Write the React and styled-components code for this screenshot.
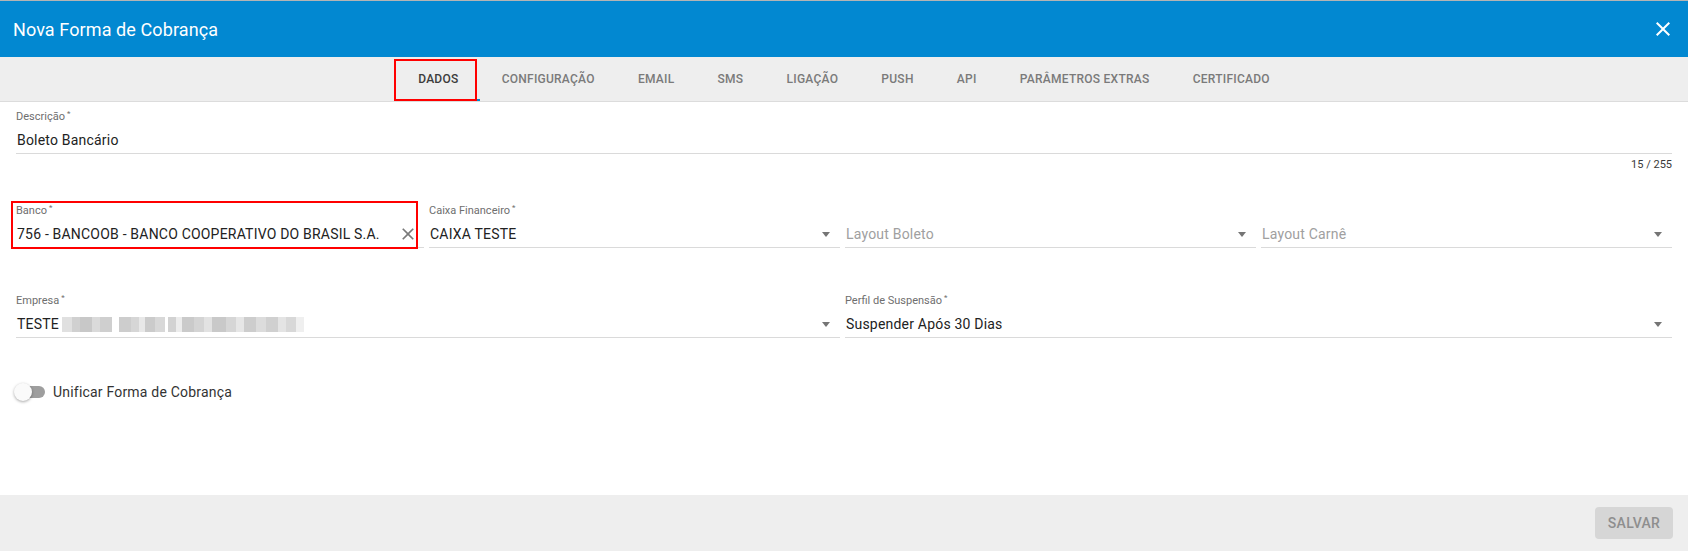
import React from "react";
import styled, { createGlobalStyle, css } from "styled-components";

const GlobalStyle = createGlobalStyle`
  html, body {
    margin: 0;
    padding: 0;
    height: 100%;
  }
  body {
    font-family: Roboto, "Liberation Sans", sans-serif;
    background: #fff;
  }
  #root {
    height: 100%;
  }
`;

const TABS = [
  "Dados",
  "Configuração",
  "Email",
  "SMS",
  "Ligação",
  "Push",
  "API",
  "Parâmetros Extras",
  "Certificado",
];

// blurred company name, pieces of the mosaic
const MOSAIC = [
  [10, "#e0e0e0"], [8, "#d0d0d0"], [12, "#c8c8c8"], [8, "#dadada"], [12, "#cfcfcf"],
  [7, "#fff"],
  [12, "#cdcdcd"], [8, "#d6d6d6"], [6, "#e8e8e8"], [10, "#cbcbcb"], [10, "#d8d8d8"],
  [3, "#fff"],
  [8, "#d2d2d2"], [6, "#ececec"], [12, "#cacaca"], [10, "#d4d4d4"], [8, "#e2e2e2"],
  [14, "#c9c9c9"], [10, "#d6d6d6"], [8, "#e6e6e6"], [12, "#cdcdcd"], [10, "#dcdcdc"],
  [12, "#d0d0d0"], [8, "#e4e4e4"], [10, "#d8d8d8"], [8, "#efefef"],
];

const CloseIcon = ({ size = 24, color = "#fff" }) => (
  <svg width={size} height={size} viewBox="0 0 24 24" fill={color}>
    <path d="M19 6.41L17.59 5 12 10.59 6.41 5 5 6.41 10.59 12 5 17.59 6.41 19 12 13.41 17.59 19 19 17.59 13.41 12z" />
  </svg>
);

const App = () => {
  return (
    <>
      <GlobalStyle />
      <Modal>
        <Header>
          <Title>Nova Forma de Cobrança</Title>
          <CloseButton type="button">
            <CloseIcon size={24} />
          </CloseButton>
        </Header>

        <TabBar>
          {TABS.map((t, i) => (
            <Tab key={t} $active={i === 0} $marked={i === 0}>
              {t}
            </Tab>
          ))}
        </TabBar>

        <Body>
          <Field>
            <Label>
              Descrição<Req>*</Req>
            </Label>
            <Control>
              <Value>Boleto Bancário</Value>
            </Control>
            <Counter>15 / 255</Counter>
          </Field>

          <Grid>
            <Field $marked>
              <Label>
                Banco<Req>*</Req>
              </Label>
              <Control>
                <Value>756 - BANCOOB - BANCO COOPERATIVO DO BRASIL S.A.</Value>
                <ClearBox>
                  <CloseIcon size={20} color="#7a7a7a" />
                </ClearBox>
              </Control>
            </Field>
            <Field>
              <Label>
                Caixa Financeiro<Req>*</Req>
              </Label>
              <Control>
                <Value>CAIXA TESTE</Value>
                <ArrowBox />
              </Control>
            </Field>
            <Field>
              <Label />
              <Control>
                <Value $placeholder>Layout Boleto</Value>
                <ArrowBox />
              </Control>
            </Field>
            <Field>
              <Label />
              <Control>
                <Value $placeholder>Layout Carnê</Value>
                <ArrowBox />
              </Control>
            </Field>

            <Field $span={2}>
              <Label>
                Empresa<Req>*</Req>
              </Label>
              <Control>
                <Value>
                  TESTE
                  <Mosaic>
                    {MOSAIC.map(([w, c], i) => (
                      <Tile key={i} $w={w} $c={c} />
                    ))}
                  </Mosaic>
                </Value>
                <ArrowBox />
              </Control>
            </Field>
            <Field $span={2}>
              <Label>
                Perfil de Suspensão<Req>*</Req>
              </Label>
              <Control>
                <Value>Suspender Após 30 Dias</Value>
                <ArrowBox />
              </Control>
            </Field>
          </Grid>

          <SwitchRow>
            <Track />
            <SwitchLabel>Unificar Forma de Cobrança</SwitchLabel>
          </SwitchRow>
        </Body>

        <Footer>
          <SaveButton type="button" disabled>
            Salvar
          </SaveButton>
        </Footer>
      </Modal>
    </>
  );
};

const Modal = styled.div`
  display: flex;
  flex-direction: column;
  height: 100vh;
  box-sizing: border-box;
  border-top: 1px solid #b4b4b4;
  overflow: hidden;
`;

const Header = styled.header`
  display: flex;
  align-items: center;
  justify-content: space-between;
  height: 56px;
  flex-shrink: 0;
  padding: 0 13px 0 13px;
  background: #0288d1;
  color: #fff;
`;

const Title = styled.h1`
  margin: 0;
  font-size: 18px;
  font-weight: 400;
  letter-spacing: 0.1px;
`;

const CloseButton = styled.button`
  display: flex;
  align-items: center;
  justify-content: center;
  padding: 0;
  border: none;
  background: transparent;
  cursor: pointer;
`;

const TabBar = styled.nav`
  display: flex;
  justify-content: center;
  height: 44px;
  flex-shrink: 0;
  background: #eeeeee;
  border-bottom: 1px solid #dcdcdc;
`;

const Tab = styled.div`
  position: relative;
  display: flex;
  align-items: center;
  padding: 0 21.6px;
  font-size: 12px;
  font-weight: 500;
  letter-spacing: 0.25px;
  text-transform: uppercase;
  color: ${(p) => (p.$active ? "#3c3c3c" : "#7a7a7a")};
  box-shadow: ${(p) => (p.$active ? "inset 0 -2px 0 #0288d1" : "none")};
  cursor: pointer;

  ${(p) =>
    p.$marked &&
    css`
      &::after {
        content: "";
        position: absolute;
        left: -3px;
        right: 3px;
        top: 2px;
        bottom: 0;
        border: 2px solid #ff0000;
        pointer-events: none;
      }
    `}
`;

const Body = styled.main`
  flex: 1;
  padding: 8px 16px 0;
`;

const Field = styled.div`
  position: relative;
  display: flex;
  flex-direction: column;
  min-width: 0;
  grid-column: span ${(p) => p.$span || 1};

  ${(p) =>
    p.$marked &&
    css`
      &::after {
        content: "";
        position: absolute;
        left: -5px;
        right: 6px;
        top: -3px;
        bottom: -1px;
        border: 2px solid #ff0000;
        pointer-events: none;
      }
    `}
`;

const Label = styled.label`
  height: 14px;
  font-size: 11px;
  line-height: 14px;
  color: #6e6e6e;
  white-space: nowrap;
`;

const Req = styled.sup`
  margin-left: 2px;
  font-size: 8px;
  line-height: 0;
  vertical-align: 4px;
`;

const Control = styled.div`
  display: flex;
  align-items: center;
  height: 20px;
  margin-top: 6px;
  padding-bottom: 3px;
  border-bottom: 1px solid #dadada;
`;

const Value = styled.div`
  flex: 1;
  display: flex;
  align-items: center;
  min-width: 0;
  padding-left: 1px;
  font-size: 14px;
  line-height: 20px;
  letter-spacing: 0.2px;
  color: ${(p) => (p.$placeholder ? "#a0a0a0" : "#222")};
  white-space: nowrap;
  overflow: hidden;
`;

const ClearBox = styled.span`
  display: flex;
  align-items: center;
  justify-content: center;
  width: 24px;
  margin-right: 4px;
`;

const ArrowBox = styled.span`
  display: flex;
  align-items: center;
  justify-content: center;
  width: 20px;
  margin-right: 4px;

  &::before {
    content: "";
    border-left: 4px solid transparent;
    border-right: 4px solid transparent;
    border-top: 5px solid #757575;
  }
`;

const Mosaic = styled.span`
  display: flex;
  height: 15px;
  margin-left: 3px;
`;

const Tile = styled.span`
  width: ${(p) => p.$w}px;
  background: ${(p) => p.$c};
`;

const Counter = styled.div`
  margin-top: 4px;
  font-size: 11px;
  line-height: 14px;
  text-align: right;
  color: #3a3a3a;
`;

const Grid = styled.div`
  display: grid;
  grid-template-columns: 408px 1fr 1fr 1fr;
  column-gap: 5px;
  row-gap: 46px;
  margin-top: 32px;
`;

const SwitchRow = styled.div`
  display: flex;
  align-items: center;
  height: 20px;
  margin-top: 44px;
`;

const Track = styled.span`
  position: relative;
  width: 25px;
  height: 12px;
  margin-left: 4px;
  border-radius: 6px;
  background: #9e9e9e;

  &::before {
    content: "";
    position: absolute;
    left: -6px;
    top: -3px;
    width: 18px;
    height: 18px;
    border-radius: 50%;
    background: #fafafa;
    box-shadow: 0 1px 3px rgba(0, 0, 0, 0.35);
  }
`;

const SwitchLabel = styled.span`
  margin-left: 8px;
  font-size: 14px;
  letter-spacing: 0.2px;
  color: #333;
`;

const Footer = styled.footer`
  display: flex;
  justify-content: flex-end;
  align-items: flex-start;
  height: 56px;
  flex-shrink: 0;
  box-sizing: border-box;
  padding: 12px 15px 0;
  background: #eeeeee;
`;

const SaveButton = styled.button`
  width: 78px;
  height: 32px;
  border: none;
  border-radius: 4px;
  background: #d6d6d6;
  color: #8e8e8e;
  font-family: Roboto, "Liberation Sans", sans-serif;
  font-size: 14px;
  font-weight: 500;
  letter-spacing: 0.3px;
  text-transform: uppercase;
`;

export default App;
